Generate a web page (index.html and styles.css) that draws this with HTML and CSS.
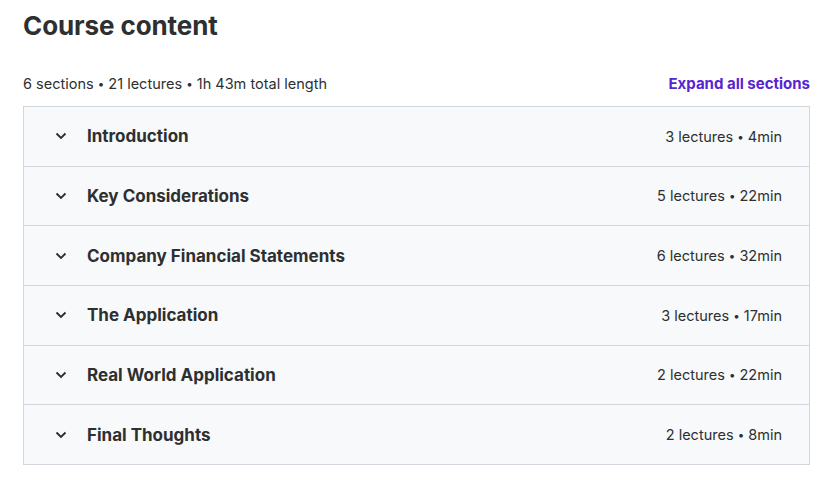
FILE: index.html
```html
<!DOCTYPE html>
<html>
	<head>
		<meta charset="UTF-8">
		<title>Course content</title>
		<link rel="stylesheet" href="styles.css">
	</head>
	<body>
		<div class="curriculum">
			<h2 class="title">Course content</h2>
			<div class="summary">
				<span>6 sections <i>•</i> 21 lectures <i>•</i> 1h 43m total length</span>
				<a class="expand" href="#">Expand all sections</a>
			</div>
			<div class="sections">
				<div class="section">
					<svg class="chev" viewBox="0 0 12 12"><path d="M1.5 3.5l4.5 4.5 4.5-4.5"/></svg>
					<span class="name">Introduction</span>
					<span class="meta">3 lectures <i>•</i> 4min</span>
				</div>
				<div class="section">
					<svg class="chev" viewBox="0 0 12 12"><path d="M1.5 3.5l4.5 4.5 4.5-4.5"/></svg>
					<span class="name">Key Considerations</span>
					<span class="meta">5 lectures <i>•</i> 22min</span>
				</div>
				<div class="section">
					<svg class="chev" viewBox="0 0 12 12"><path d="M1.5 3.5l4.5 4.5 4.5-4.5"/></svg>
					<span class="name">Company Financial Statements</span>
					<span class="meta">6 lectures <i>•</i> 32min</span>
				</div>
				<div class="section">
					<svg class="chev" viewBox="0 0 12 12"><path d="M1.5 3.5l4.5 4.5 4.5-4.5"/></svg>
					<span class="name">The Application</span>
					<span class="meta">3 lectures <i>•</i> 17min</span>
				</div>
				<div class="section">
					<svg class="chev" viewBox="0 0 12 12"><path d="M1.5 3.5l4.5 4.5 4.5-4.5"/></svg>
					<span class="name">Real World Application</span>
					<span class="meta">2 lectures <i>•</i> 22min</span>
				</div>
				<div class="section">
					<svg class="chev" viewBox="0 0 12 12"><path d="M1.5 3.5l4.5 4.5 4.5-4.5"/></svg>
					<span class="name">Final Thoughts</span>
					<span class="meta">2 lectures <i>•</i> 8min</span>
				</div>
			</div>
		</div>
	</body>
</html>
```
FILE: styles.css
```css
*{
	margin: 0;
	padding: 0;
	box-sizing: border-box;
}
body{
	background: #fff;
	color: #2d2f31;
	font-family: Inter, "Liberation Sans", sans-serif;
	padding: 10px 27px 0 23px;
}
i{
	font-style: normal;
	font-size: 0.8em;
	vertical-align: 1px;
}
.title{
	font-size: 26px;
	font-weight: 700;
	line-height: 32px;
	color: #2d2f31;
	letter-spacing: -0.1px;
}
.summary{
	display: flex;
	justify-content: space-between;
	align-items: center;
	margin-top: 31px;
	height: 20px;
	font-size: 14.5px;
	color: #2d2f31;
}
.expand{
	color: #5624d0;
	font-weight: 700;
	font-size: 15px;
	text-decoration: none;
}
.sections{
	margin-top: 13px;
	border: 1px solid #d1d7dc;
	border-bottom: none;
}
.section{
	display: flex;
	align-items: center;
	height: 59.67px;
	padding: 0 27px 0 31px;
	background: #f7f9fa;
	border-bottom: 1px solid #d1d7dc;
}
.chev{
	width: 12px;
	height: 12px;
	fill: none;
	stroke: #2d2f31;
	stroke-width: 1.9;
	flex: none;
}
.name{
	margin-left: 20px;
	font-size: 17px;
	font-weight: 700;
	flex: 1;
}
.meta{
	font-size: 14.5px;
}
```
